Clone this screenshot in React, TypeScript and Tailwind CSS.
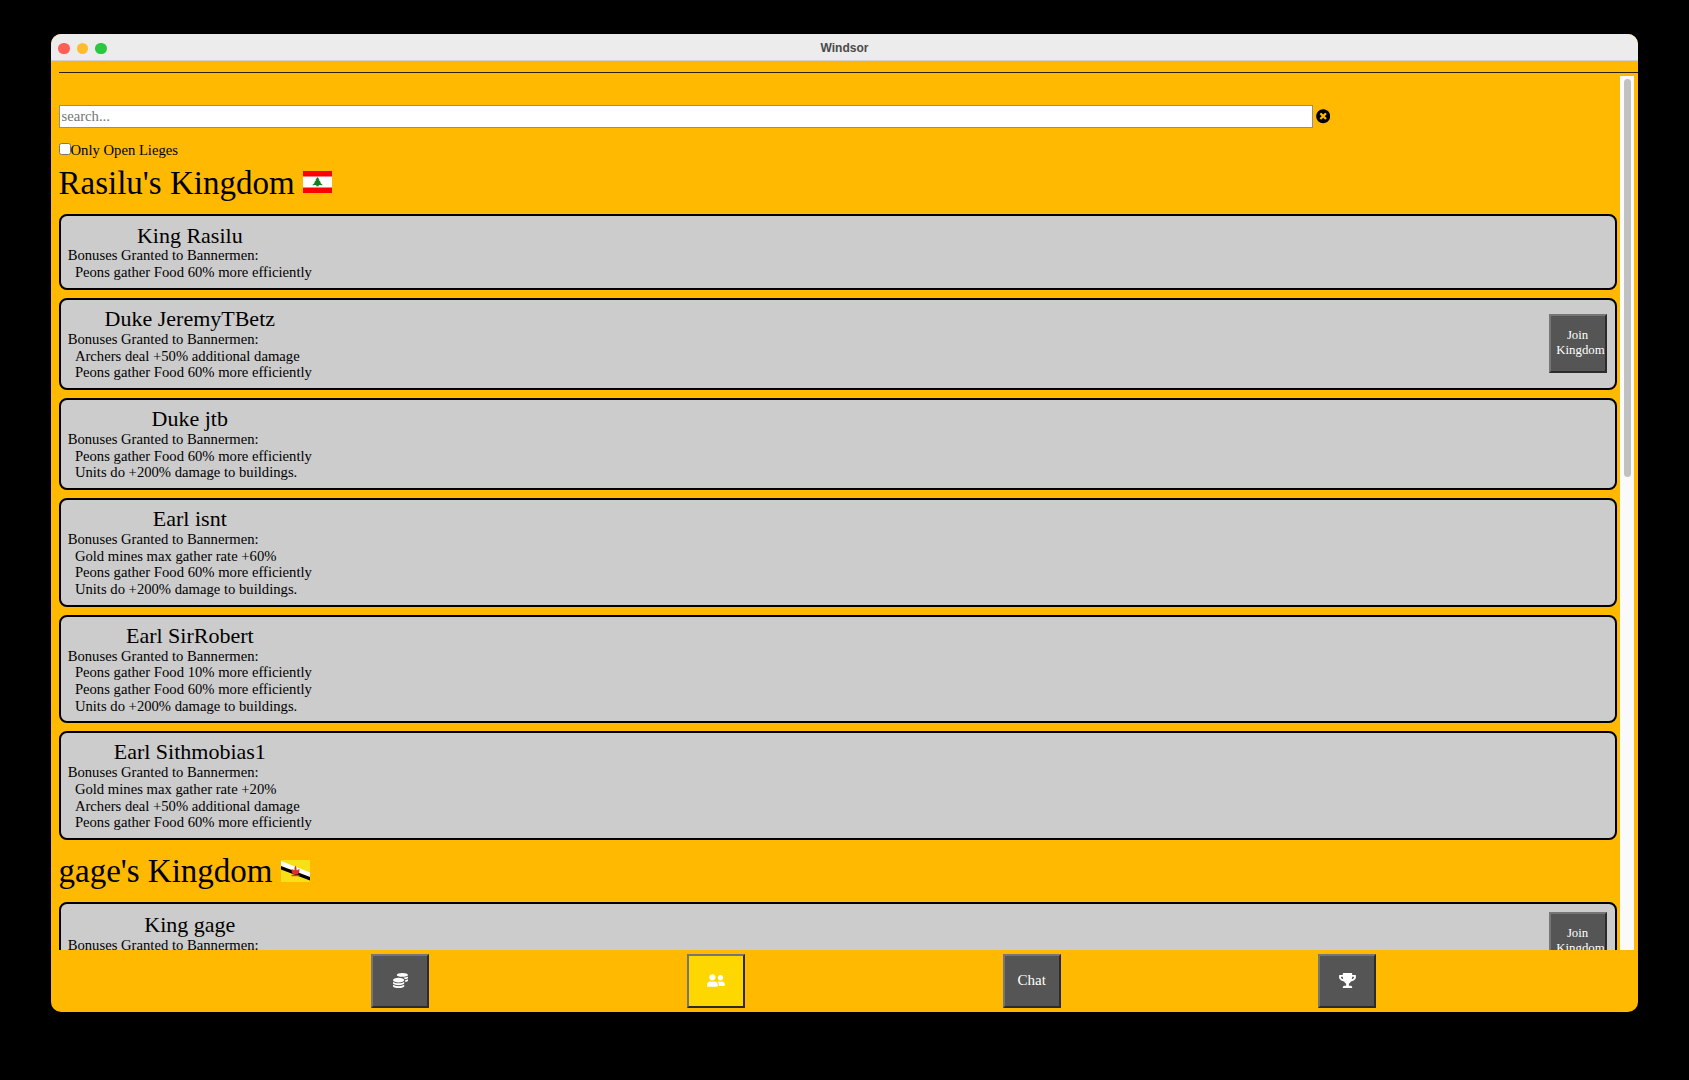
import React from 'react'
import { FaCoins, FaTimesCircle, FaTrophy, FaUserFriends } from 'react-icons/fa'

const FOOD60 = 'Peons gather Food 60% more efficiently'
const FOOD10 = 'Peons gather Food 10% more efficiently'
const ARCHERS = 'Archers deal +50% additional damage'
const BUILDINGS = 'Units do +200% damage to buildings.'

const rasilu = [
  { name: 'King Rasilu', bonuses: [FOOD60] },
  { name: 'Duke JeremyTBetz', bonuses: [ARCHERS, FOOD60], join: true },
  { name: 'Duke jtb', bonuses: [FOOD60, BUILDINGS] },
  { name: 'Earl isnt', bonuses: ['Gold mines max gather rate +60%', FOOD60, BUILDINGS] },
  { name: 'Earl SirRobert', bonuses: [FOOD10, FOOD60, BUILDINGS] },
  { name: 'Earl Sithmobias1', bonuses: ['Gold mines max gather rate +20%', ARCHERS, FOOD60] },
]

const gage = [{ name: 'King gage', bonuses: [FOOD60], join: true }]

function LebanonFlag() {
  return (
    <svg viewBox="0 0 29 22" className="inline-block w-[29px] h-[22px] ml-[8px] mb-[8px]">
      <rect width="29" height="22" fill="#ff0000" />
      <rect y="5.5" width="29" height="11" fill="#ffffff" />
      <path d="M14.5 6l2 2.8h-.9l2.5 2.6h-1.2l3 2.9-4.2-.4v1.4h-2.4v-1.4l-4.2.4 3-2.9h-1.2l2.5-2.6h-.9z" fill="#0f7f24" />
    </svg>
  )
}

function BruneiFlag() {
  return (
    <svg viewBox="0 0 29 22" className="inline-block w-[29px] h-[22px] ml-[8px] mb-[8px]">
      <rect width="29" height="22" fill="#f7e017" />
      <path d="M0 1l29 11.5v4.5L0 6z" fill="#ffffff" />
      <path d="M0 6l29 11v3.5L0 9.5z" fill="#000000" />
      <path d="M14.5 5.5l1 2.4v2.4l3-1.3-.4 3.8-1.6 1.8h-4l-1.6-1.8-.4-3.8 3 1.3V7.9z" fill="#d8332b" />
      <rect x="10.5" y="14.8" width="8" height="1.4" fill="#d8332b" />
    </svg>
  )
}

function Card({ name, bonuses, join }: { name: string; bonuses: string[]; join?: boolean }) {
  return (
    <div className="flex items-center justify-between mb-[8px] p-[7.2px] bg-[#cccccc] border-2 border-black rounded-[8px]">
      <div className="text-[14.67px] leading-[16.6px] text-black">
        <div className="text-[22px] leading-[23.9px] text-center">{name}</div>
        <div>Bonuses Granted to Bannermen:</div>
        {bonuses.map((b, i) => (
          <div key={i} className="pl-[7.2px]">{b}</div>
        ))}
      </div>
      {join && (
        <button className="w-[58px] h-[59px] shrink-0 mr-[1px] pl-[5.5px] pr-[6px] pb-[1px] text-[12.8px] leading-[15px] text-white text-center bg-[#555555] border-2 border-t-[#767676] border-l-[#767676] border-r-[#2b2b2b] border-b-[#2b2b2b]">
          Join Kingdom
        </button>
      )}
    </div>
  )
}

function NavButton({ active, children }: { active?: boolean; children: React.ReactNode }) {
  return (
    <button
      className={`flex items-center justify-center w-[58px] h-[54px] pb-[2px] text-white border-2 border-t-[#767676] border-l-[#767676] border-r-[#2b2b2b] border-b-[#2b2b2b] ${
        active ? 'bg-[#ffd700]' : 'bg-[#555555]'
      }`}
    >
      {children}
    </button>
  )
}

export default function App() {
  return (
    <div className="h-screen bg-black pt-[34px] pl-[51px] font-['Liberation_Serif',serif] text-black">
      <div className="flex flex-col w-[1587px] h-[978px] overflow-hidden rounded-[10px] bg-[#ffb900]">
        {/* title bar */}
        <div className="relative flex items-center justify-center shrink-0 h-[27px] pt-[1px] bg-[#ececec] border-b border-[#d0d0d0]">
          <div className="absolute left-[7px] top-[8.5px] flex gap-[7px]">
            <span className="w-[11.5px] h-[11.5px] rounded-full bg-[#ff5f57]" />
            <span className="w-[11.5px] h-[11.5px] rounded-full bg-[#febc2e]" />
            <span className="w-[11.5px] h-[11.5px] rounded-full bg-[#28c840]" />
          </div>
          <span className="font-['Liberation_Sans',sans-serif] font-bold text-[12px] text-[#4a4a4a]">Windsor</span>
        </div>

        <div className="shrink-0 h-[1px] mt-[10.5px] ml-[8px] bg-[#2a2000]" />

        <div className="flex flex-1 min-h-0 mt-[3.5px] pl-[7.5px]">
          <div className="flex-1 min-w-0 overflow-hidden pt-[29px]">
            <div className="flex items-center">
              <input
                placeholder="search..."
                className="w-[1254px] h-[23px] px-[2px] text-[14.67px] bg-white border-[1.5px] border-[#8f8f8f] placeholder:text-[#757575] outline-none"
              />
              <FaTimesCircle className="ml-[3.5px] w-[14.4px] h-[14.4px] text-black" />
            </div>

            <label className="flex items-start mt-[14px] text-[14.67px] leading-[17px]">
              <input type="checkbox" className="appearance-none w-[12px] h-[12px] mt-[1px] bg-white border border-[#767676] rounded-[2.5px]" />
              Only Open Lieges
            </label>

            <h1 className="mt-[5px] mb-[12.4px] text-[33px] leading-[38px]">
              Rasilu's Kingdom
              <LebanonFlag />
            </h1>
            {rasilu.map((c) => (
              <Card key={c.name} {...c} />
            ))}

            <h1 className="mt-[12.5px] mb-[12px] text-[33px] leading-[38px]">
              gage's Kingdom
              <BruneiFlag />
            </h1>
            {gage.map((c) => (
              <Card key={c.name} {...c} />
            ))}
          </div>

          {/* scrollbar */}
          <div className="shrink-0 w-[14px] ml-[3px] mr-[4px] pt-[3px] bg-[#fafafa]">
            <div className="w-[7px] h-[398px] mx-auto rounded-full bg-[#c1c1c1]" />
          </div>
        </div>

        {/* bottom nav */}
        <div className="flex justify-between shrink-0 h-[62px] pt-[4px] pl-[320px] pr-[261.5px]">
          <NavButton><FaCoins className="w-[15px] h-[15px]" /></NavButton>
          <NavButton active><FaUserFriends className="w-[18px] h-[15px]" /></NavButton>
          <NavButton><span className="text-[15px]">Chat</span></NavButton>
          <NavButton><FaTrophy className="w-[17px] h-[15px]" /></NavButton>
        </div>
      </div>
    </div>
  )
}
